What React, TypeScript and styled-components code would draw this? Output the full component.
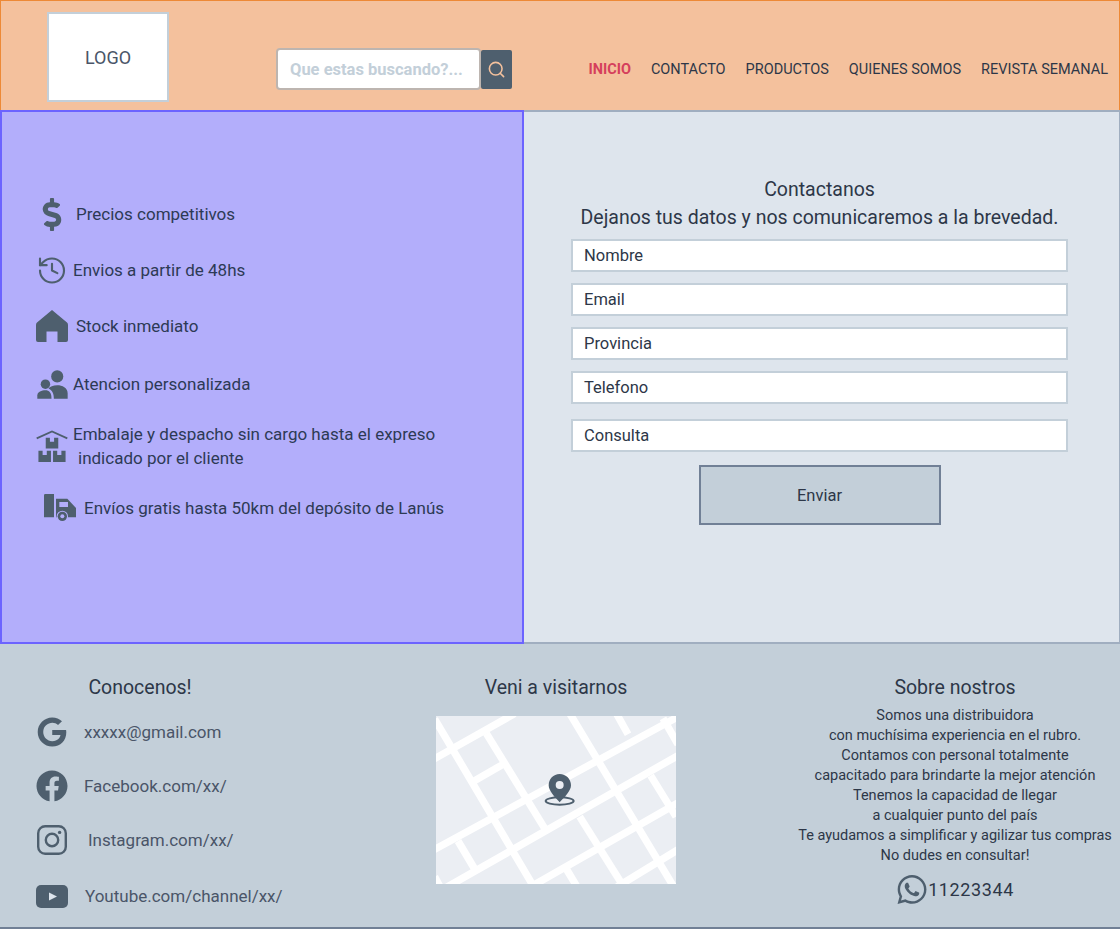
import React from "react";
import styled, { createGlobalStyle } from "styled-components";
import { FaDollarSign, FaGoogle, FaFacebook, FaWhatsapp } from "react-icons/fa";
import { History, Search } from "lucide-react";

const Global = createGlobalStyle`
  html, body { margin: 0; padding: 0; background: #fff; }
  * { box-sizing: border-box; }
  body { font-family: "Roboto", "Liberation Sans", sans-serif; color: #2d3748; }
`;

const ICON = "#4e5f6e";

const Page = styled.div`
  width: 1120px;
  display: flex;
  flex-direction: column;
`;

const Header = styled.header`
  height: 110px;
  background: #f4c19d;
  border: 1px solid #ed8936;
  border-bottom: 0;
  display: flex;
  align-items: flex-start;
  padding-left: 46px;
`;

const LogoBox = styled.div`
  width: 122px;
  height: 90px;
  margin-top: 11px;
  background: #fff;
  border: 2px solid #c3cfd9;
  display: flex;
  align-items: center;
  justify-content: center;
  font-size: 18px;
  color: #4a5568;
`;

const SearchWrap = styled.form`
  display: flex;
  align-items: center;
  margin: 47px 0 0 107px;
`;

const SearchBox = styled.div`
  width: 205px;
  height: 42px;
  background: #fff;
  border: 2px solid #bdb5b0;
  border-radius: 4px;
  padding-left: 12px;
  display: flex;
  align-items: center;
  font-size: 16.5px;
  font-weight: 700;
  color: #c3cfd9;
  white-space: nowrap;
`;

const SearchButton = styled.button`
  width: 31px;
  height: 39px;
  padding: 0;
  background: ${ICON};
  border: 0;
  border-radius: 2px;
  color: #f4c19d;
  display: flex;
  align-items: center;
  justify-content: center;
`;

const Nav = styled.nav`
  margin-left: auto;
  margin-top: 59px;
  padding-right: 11px;
  display: flex;
  gap: 20px;
`;

const NavLink = styled.a<{ $active?: boolean }>`
  font-size: 14.5px;
  line-height: 20px;
  font-weight: ${(p) => (p.$active ? 700 : 400)};
  color: ${(p) => (p.$active ? "#d53f5c" : "#2d3748")};
  white-space: nowrap;
`;

const Main = styled.main`
  height: 534px;
  display: flex;
`;

const Benefits = styled.section`
  width: 525px;
  background: #b3aefb;
  border: 2px solid #6c63ff;
  padding-top: 74px;
  display: flex;
  flex-direction: column;
`;

const Benefit = styled.div<{ $h: number; $indent: number; $gap: number }>`
  height: ${(p) => p.$h}px;
  padding-left: ${(p) => p.$indent}px;
  display: flex;
  align-items: center;
  gap: ${(p) => p.$gap}px;
  font-size: 17px;
  line-height: 24px;
  color: #2d3a55;
`;

const Indented = styled.span`
  display: block;
  padding-left: 5px;
`;

const Contact = styled.section`
  flex: 1;
  background: #dee5ed;
  border-top: 2px solid #a0aec0;
  border-right: 1px solid #a0aec0;
  border-bottom: 2px solid #a0aec0;
  padding: 64px 51px 0 47px;
  display: flex;
  flex-direction: column;
  align-items: center;
`;

const ContactTitle = styled.h2`
  margin: 0 0 7px;
  font-size: 19.5px;
  line-height: 28px;
  font-weight: 400;
  text-align: center;
  color: #2d3748;
`;

const Field = styled.div<{ $after?: number }>`
  width: 497px;
  height: 33px;
  margin-bottom: ${(p) => p.$after ?? 11}px;
  background: #fff;
  border: 2px solid #c3cfd9;
  padding-left: 11px;
  display: flex;
  align-items: center;
  font-size: 16.5px;
  color: #2d3748;
`;

const SendButton = styled.button`
  width: 242px;
  height: 60px;
  margin-top: 2px;
  background: #c3cfd9;
  border: 2px solid #718096;
  font-family: inherit;
  font-size: 16.5px;
  color: #2d3748;
`;

const Footer = styled.footer`
  height: 285px;
  background: #c3cfd9;
  border-bottom: 2px solid #718096;
  display: grid;
  grid-template-columns: 322px 468px 330px;
`;

const Column = styled.div`
  display: flex;
  flex-direction: column;
`;

const FooterTitle = styled.h3<{ $w?: number }>`
  margin: 30px 0 14px;
  width: ${(p) => p.$w ?? 100}${(p) => (p.$w ? "px" : "%")};
  font-size: 19.5px;
  line-height: 28px;
  font-weight: 400;
  text-align: center;
  color: #2d3748;
`;

const Social = styled.div<{ $h: number; $gap: number }>`
  height: ${(p) => p.$h}px;
  padding-left: 36px;
  display: flex;
  align-items: center;
  gap: ${(p) => p.$gap}px;
  font-size: 17px;
  color: #4a5568;
`;

const IconSlot = styled.span`
  width: 32px;
  display: flex;
  align-items: center;
  justify-content: center;
  color: ${ICON};
`;

const MapFrame = styled.div`
  width: 240px;
  height: 168px;
  align-self: center;
  display: block;
`;

const About = styled.div`
  font-size: 14.5px;
  line-height: 20px;
  text-align: center;
  color: #2d3748;
  margin-top: -10px;
`;

const Phone = styled.div`
  margin-top: 7px;
  display: flex;
  align-items: center;
  justify-content: center;
  font-size: 18px;
  letter-spacing: 0.6px;
  color: #2d3748;
`;

const HouseIcon = () => (
  <svg width="32" height="32" viewBox="0 0 32 32" fill={ICON}>
    <path d="M16 0 L31 12.6 Q32 13.5 32 15 V30 Q32 32 30 32 H21.5 V21.5 H10.5 V32 H2 Q0 32 0 30 V15 Q0 13.5 1 12.6 Z" />
  </svg>
);

const PeopleIcon = () => (
  <svg width="31" height="29" viewBox="50 563 92 86" fill={ICON}>
    <circle cx="110" cy="582" r="18" />
    <circle cx="75" cy="605" r="14" />
    <path d="M80 648 H141 V632 C141 615 125 608 110 608 C98 608 88 612 84 618 C96 624 100 634 100 648 Z" transform="translate(-0 0)" />
    <path d="M51 648 V638 C51 628 64 623 75 623 C86 623 93 630 93 648 Z" />
  </svg>
);

const BoxesIcon = () => (
  <svg width="32" height="32" viewBox="50 62 92 92" fill={ICON}>
    <path d="M52 86 L96 66 L140 86" fill="none" stroke={ICON} strokeWidth="5" />
    <path d="M78 84 H90 V96 H102 V84 H114 V115 H78 Z" />
    <path d="M57 122 H69 V134 H81 V122 H93 V155 H57 Z" />
    <path d="M99 122 H111 V134 H123 V122 H135 V155 H99 Z" />
  </svg>
);

const TruckIcon = () => (
  <svg width="32" height="28" viewBox="72 258 96 84" fill={ICON}>
    <path d="M72 262 Q72 258 76 258 H102 V328 H72 Z" />
    <path d="M108 272 H142 L168 300 V328 H108 Z" />
    <rect x="118" y="282" width="26" height="15" fill="#b3aefb" />
    <circle cx="127" cy="325" r="17" fill="#b3aefb" />
    <circle cx="127" cy="325" r="14" />
    <circle cx="127" cy="325" r="6" fill="#b3aefb" />
  </svg>
);

const InstagramIcon = () => (
  <svg width="30" height="30" viewBox="0 0 30 30" fill="none" stroke={ICON}>
    <rect x="1.2" y="1.2" width="27.6" height="27.6" rx="7" strokeWidth="2.4" />
    <circle cx="15" cy="15" r="6.2" strokeWidth="2.4" />
    <circle cx="22.6" cy="7.4" r="1.7" fill={ICON} stroke="none" />
  </svg>
);

const YoutubeIcon = () => (
  <svg width="32" height="23" viewBox="0 0 32 23">
    <rect width="32" height="23" rx="5" fill={ICON} />
    <path d="M13 7.5 L21 11.5 L13 15.5 Z" fill="#dee5ed" />
  </svg>
);

const A_ROADS = [
  "M0 172 L260 26",
  "M0 444 L760 30",
  "M50 550 L760 146",
  "M300 550 L760 288",
  "M560 550 L760 428",
  "M135 230 L225 178",
];
const B_ROADS = [
  "M20 42 L320 550",
  "M175 85 L350 370",
  "M425 25 L740 550",
  "M565 25 L600 88",
  "M705 40 L750 118",
  "M455 335 L590 550",
  "M668 212 L744 335",
  "M90 408 L140 492",
  "M415 492 L450 550",
  "M20 515 L36 545",
];

const MapIllustration = () => (
  <MapFrame>
    <svg width="240" height="168" viewBox="24 33 720 504" style={{ display: "block" }}>
      <rect x="24" y="33" width="720" height="504" fill="#ebeef3" />
      <g stroke="#fff" strokeWidth="22" fill="none">
        {[...A_ROADS, ...B_ROADS].map((d) => (
          <path key={d} d={d} />
        ))}
      </g>
      <ellipse cx="395" cy="288" rx="42" ry="11" fill="none" stroke={ICON} strokeWidth="6" />
      <path
        d="M395 207 C414 207 429 222 429 241 C429 258 409 277 395 292 C381 277 362 258 362 241 C362 222 376 207 395 207 Z"
        fill={ICON}
      />
      <circle cx="395" cy="240" r="12" fill="#ebeef3" />
    </svg>
  </MapFrame>
);

export default function App() {
  return (
    <Page>
      <Global />
      <Header>
        <LogoBox>LOGO</LogoBox>
        <SearchWrap>
          <SearchBox>Que estas buscando?...</SearchBox>
          <SearchButton type="button" aria-label="Buscar">
            <Search size={19} strokeWidth={2} />
          </SearchButton>
        </SearchWrap>
        <Nav>
          <NavLink $active>INICIO</NavLink>
          <NavLink>CONTACTO</NavLink>
          <NavLink>PRODUCTOS</NavLink>
          <NavLink>QUIENES SOMOS</NavLink>
          <NavLink>REVISTA SEMANAL</NavLink>
        </Nav>
      </Header>
      <Main>
        <Benefits>
          <Benefit $h={56} $indent={34} $gap={8}>
            <IconSlot><FaDollarSign size={33} /></IconSlot>
            <span>Precios competitivos</span>
          </Benefit>
          <Benefit $h={56} $indent={34} $gap={5}>
            <IconSlot><History size={35} strokeWidth={1.6} /></IconSlot>
            <span>Envios a partir de 48hs</span>
          </Benefit>
          <Benefit $h={56} $indent={34} $gap={8}>
            <IconSlot><HouseIcon /></IconSlot>
            <span>Stock inmediato</span>
          </Benefit>
          <Benefit $h={60} $indent={34} $gap={5}>
            <IconSlot><PeopleIcon /></IconSlot>
            <span>Atencion personalizada</span>
          </Benefit>
          <Benefit $h={64} $indent={34} $gap={5}>
            <IconSlot><BoxesIcon /></IconSlot>
            <span>
              Embalaje y despacho sin cargo hasta el expreso
              <Indented>indicado por el cliente</Indented>
            </span>
          </Benefit>
          <Benefit $h={60} $indent={42} $gap={8}>
            <IconSlot><TruckIcon /></IconSlot>
            <span>Envíos gratis hasta 50km del depósito de Lanús</span>
          </Benefit>
        </Benefits>
        <Contact>
          <ContactTitle>
            Contactanos
            <br />
            Dejanos tus datos y nos comunicaremos a la brevedad.
          </ContactTitle>
          <Field>Nombre</Field>
          <Field>Email</Field>
          <Field>Provincia</Field>
          <Field $after={15}>Telefono</Field>
          <Field>Consulta</Field>
          <SendButton type="button">Enviar</SendButton>
        </Contact>
      </Main>
      <Footer>
        <Column>
          <FooterTitle $w={280}>Conocenos!</FooterTitle>
          <Social $h={32} $gap={16}>
            <IconSlot><FaGoogle size={30} /></IconSlot>
            <span>xxxxx@gmail.com</span>
          </Social>
          <Social $h={76} $gap={16}>
            <IconSlot><FaFacebook size={32} /></IconSlot>
            <span>Facebook.com/xx/</span>
          </Social>
          <Social $h={32} $gap={20}>
            <IconSlot><InstagramIcon /></IconSlot>
            <span>Instagram.com/xx/</span>
          </Social>
          <Social $h={80} $gap={17}>
            <IconSlot><YoutubeIcon /></IconSlot>
            <span>Youtube.com/channel/xx/</span>
          </Social>
        </Column>
        <Column>
          <FooterTitle>Veni a visitarnos</FooterTitle>
          <MapIllustration />
        </Column>
        <Column>
          <FooterTitle>Sobre nostros</FooterTitle>
          <About>
            Somos una distribuidora
            <br />
            con muchísima experiencia en el rubro.
            <br />
            Contamos con personal totalmente
            <br />
            capacitado para brindarte la mejor atención
            <br />
            Tenemos la capacidad de llegar
            <br />
            a cualquier punto del país
            <br />
            Te ayudamos a simplificar y agilizar tus compras
            <br />
            No dudes en consultar!
          </About>
          <Phone>
            <IconSlot><FaWhatsapp size={33} /></IconSlot>
            <span>11223344</span>
          </Phone>
        </Column>
      </Footer>
    </Page>
  );
}
